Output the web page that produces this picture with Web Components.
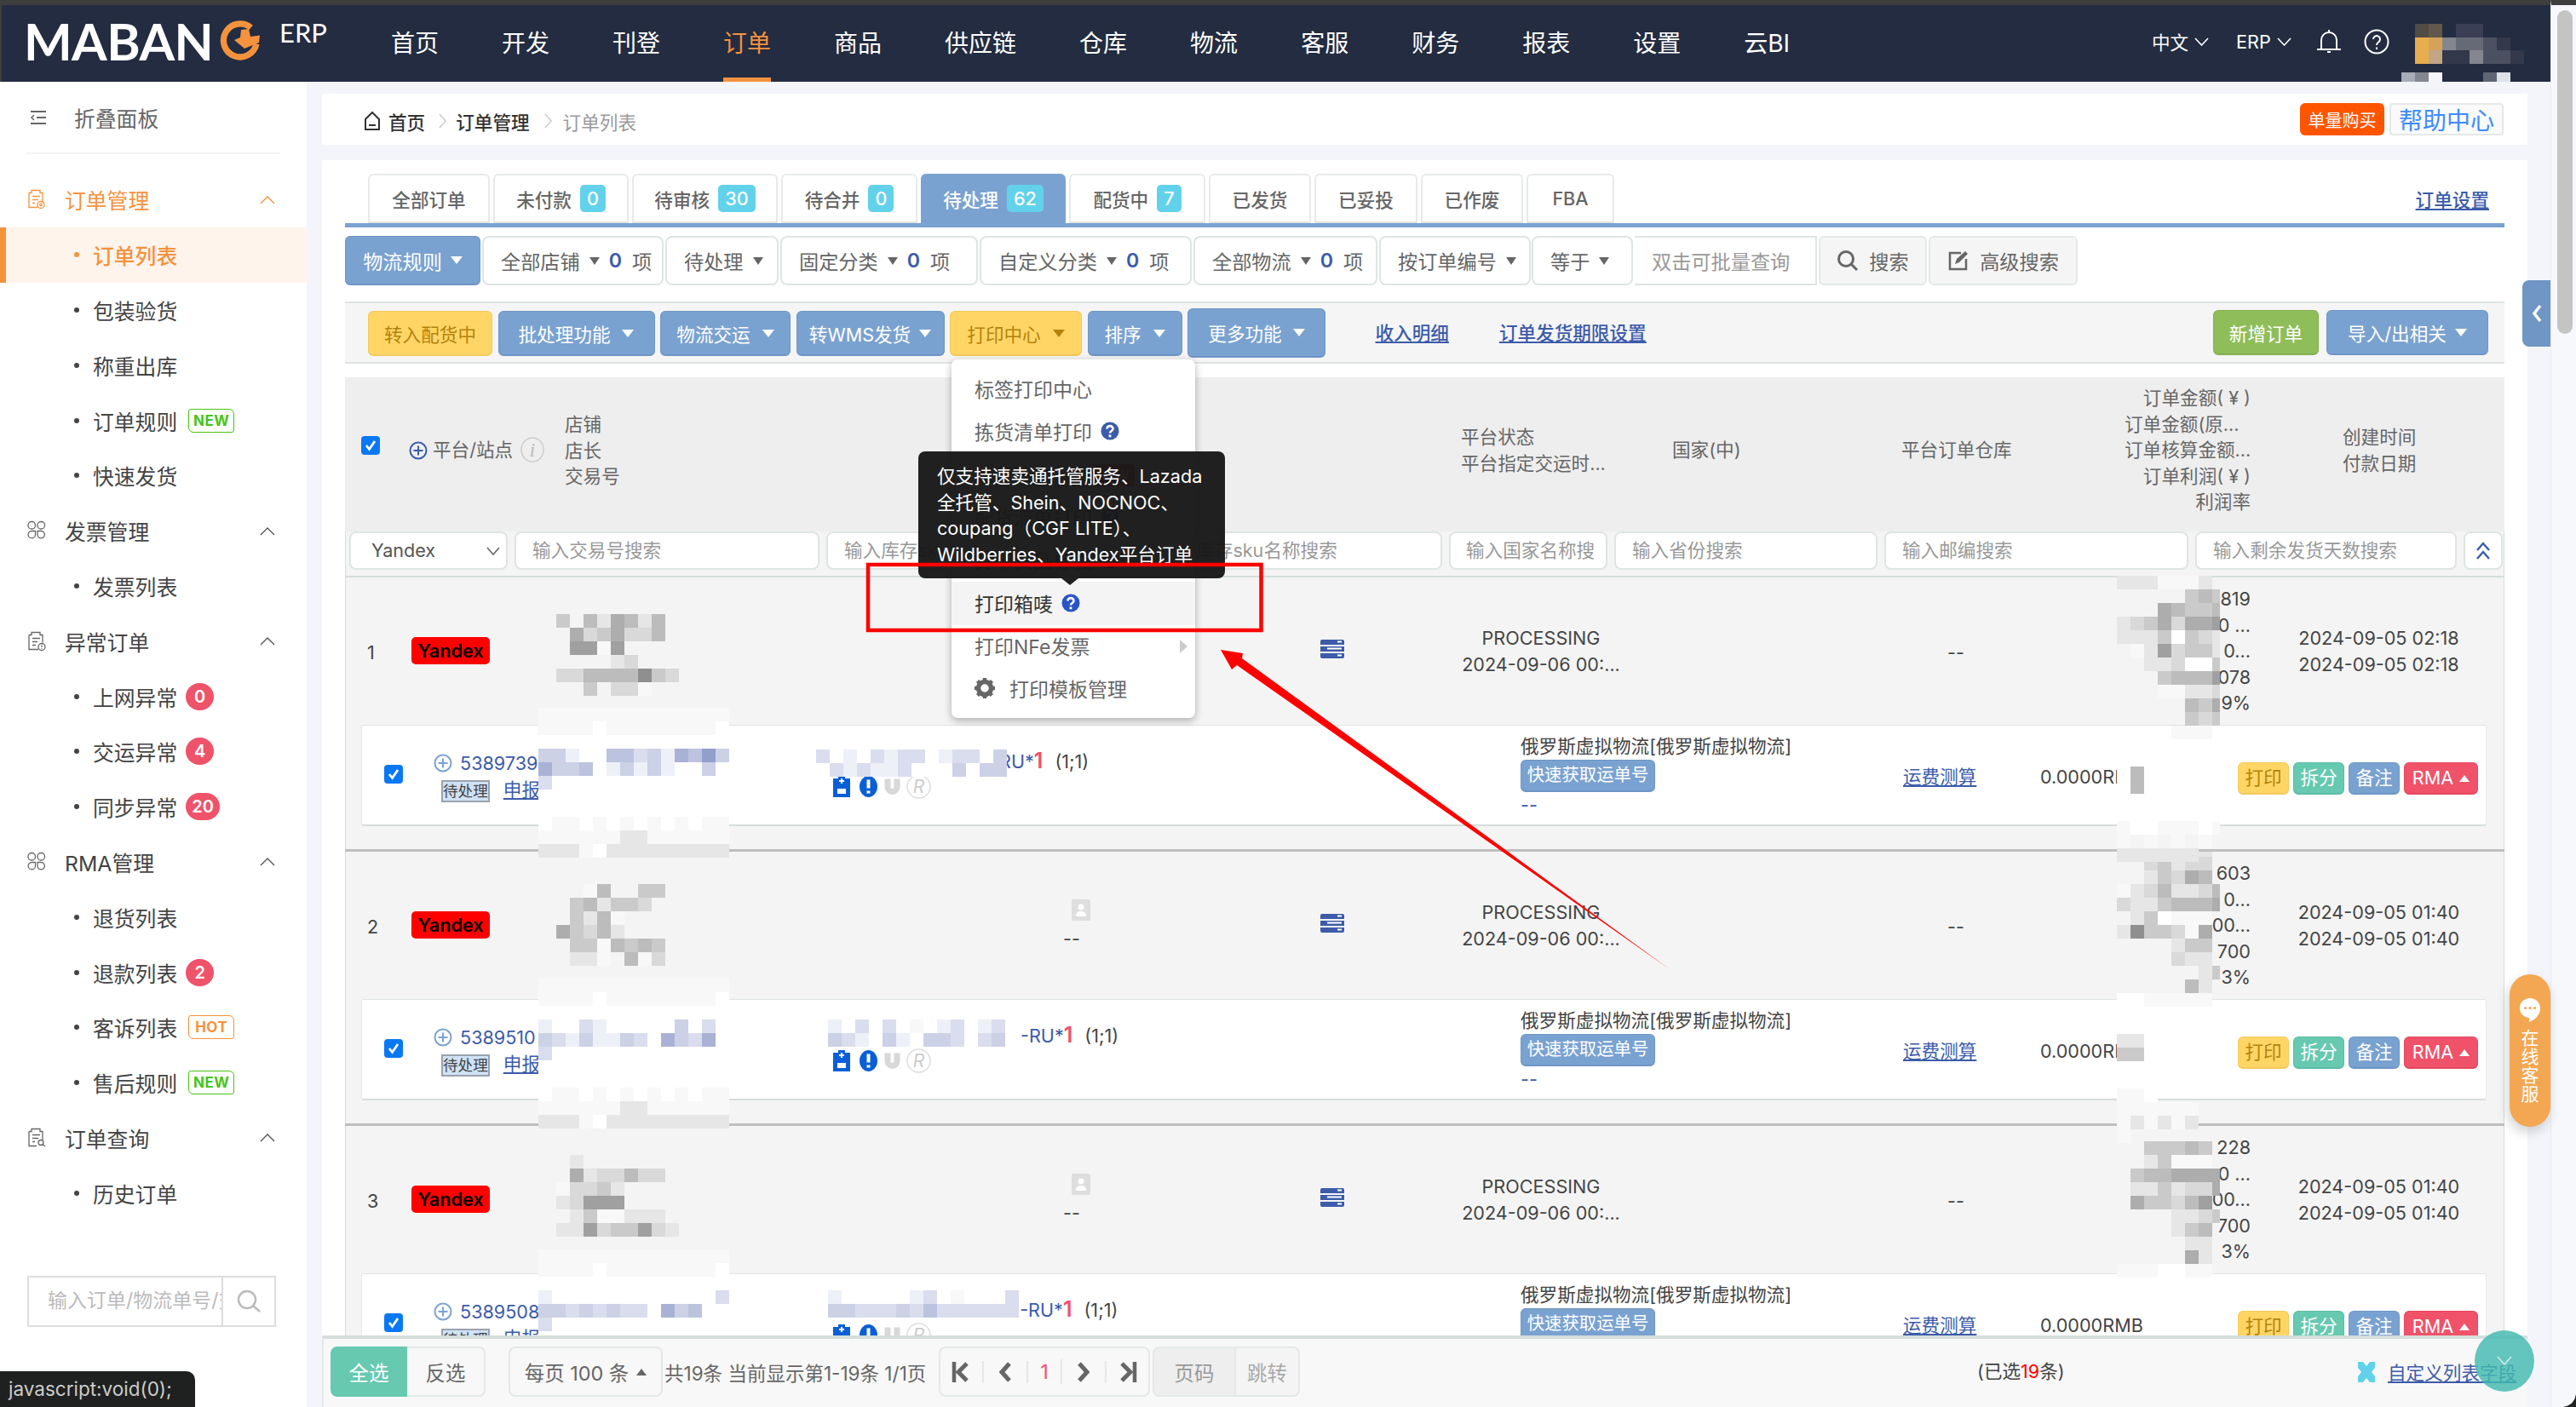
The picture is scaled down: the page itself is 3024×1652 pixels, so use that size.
<!DOCTYPE html>
<html lang="zh-CN">
<head>
<meta charset="utf-8">
<title>订单列表</title>
<style>
	html, body { margin: 0; padding: 0; }
	body {
		width: 3024px;
		height: 1652px;
		overflow: hidden;
		position: relative;
		display: grid;
		grid-template-columns: 360px 2634px 30px;
		grid-template-rows: 96px 1556px;
		font-family: Inter, "Noto Sans CJK SC", sans-serif;
		font-size: 21.6px;
		color: #555;
		background: #f3f5fa;
	}
	mb-navbar { grid-column: 1 / 3; grid-row: 1; }
	mb-scrollbar { grid-column: 3; grid-row: 1 / 3; }
	mb-sidebar { grid-column: 1; grid-row: 2; }
	.content {
		grid-column: 2;
		grid-row: 2;
		min-height: 0;
		display: flex;
		flex-direction: column;
		padding: 14px 27px 0 18px;
		gap: 18px;
	}
</style>
</head>
<body>
	<mb-navbar></mb-navbar>
	<mb-sidebar></mb-sidebar>
	<div class="content">
		<mb-breadcrumb></mb-breadcrumb>
		<mb-card>
			<mb-order-tabs></mb-order-tabs>
			<mb-filter-bar></mb-filter-bar>
			<mb-toolbar></mb-toolbar>
			<mb-order-table>
				<mb-table-head></mb-table-head>
				<mb-order-row data-order="1" style="z-index:3"></mb-order-row>
				<mb-order-row data-order="2" style="z-index:2"></mb-order-row>
				<mb-order-row data-order="3" style="z-index:1"></mb-order-row>
			</mb-order-table>
			<mb-footer-bar></mb-footer-bar>
		</mb-card>
	</div>
	<mb-scrollbar></mb-scrollbar>

	<mb-print-menu></mb-print-menu>
	<mb-annotation></mb-annotation>
	<mb-side-toggle></mb-side-toggle>
	<mb-chat-tab></mb-chat-tab>
	<mb-scroll-down></mb-scroll-down>
	<mb-status-tip>javascript:void(0);</mb-status-tip>

<script>
// static components: markup only, cloned into an open shadow root
function component(name, html) {
	const tpl = document.createElement('template');
	tpl.innerHTML = html;
	customElements.define(name, class extends HTMLElement {
		constructor() {
			super();
			this.attachShadow({mode: 'open'}).append(tpl.content.cloneNode(true));
		}
	});
}

const BLUE = '#7aa2d0';
const LINK = '#3c5ba9';
const ORANGE = '#f5923e';

// mosaic palette: grays, whites, blue tints of the blurred customer data
const PALETTE = {
	'8': '#8f8f8f', '9': '#a0a0a0', a: '#adadad', b: '#bcbcbc', c: '#cacaca', d: '#d9d9d9', e: '#e6e6e6', f: '#f8f8f8', g: '#ffffff',
	p: '#eef0f8', q: '#d9dded', r: '#ccd1e6', s: '#bcc3de', t: '#a9b2d5', u: '#939fcb',
	N: '#534c45', Q: '#62584c', D: '#3a3f55', O: '#e8ad4f', P: '#d4a35a', M: '#83868f', L: '#666a77', B: '#4c5161', K: '#33384a', R: '#c2a684',
	H: '#a8acb8', J: '#82868f', W: '#f4f5fa', V: '#5f6575', X: '#e0e2ea'
};

class MbMosaic extends HTMLElement {
	constructor() {
		super();
		this.attachShadow({mode: 'open'});
	}

	connectedCallback() {
		const rows = this.getAttribute('rows').split('|');
		const cw = this.getAttribute('cw') || 16;
		const ch = this.getAttribute('ch') || 16;
		const clip = this.getAttribute('w');
		let cells = '';
		rows.forEach((row) => {
			for (const c of row.padEnd(rows[0].length, '.')) {
				cells += `<i style="background:${PALETTE[c] || 'transparent'}"></i>`;
			}
		});
		this.shadowRoot.innerHTML = `<style>
			:host { position: absolute; left: ${this.getAttribute('x')}px; top: ${this.getAttribute('y')}px; display: grid;
				${clip ? `width: ${clip}px; overflow: hidden;` : ''}
				grid-template-columns: repeat(${rows[0].length}, ${cw}px); grid-auto-rows: ${ch}px; pointer-events: none; }
			i { display: block; }
		</style>${cells}`;
	}
}
customElements.define('mb-mosaic', MbMosaic);

class MbBtn extends HTMLElement {
	constructor() {
		super();
		this.attachShadow({mode: 'open'}).innerHTML = `<style>
			:host { display: inline-flex; align-items: center; justify-content: center; box-sizing: border-box; gap: 10px;
				height: 100%; border-radius: 6px; border: 1px solid transparent; border-bottom-width: 2px; white-space: nowrap; flex: none; }
			:host([kind=blue]) { background: ${BLUE}; border-color: #6d96c6; color: #fff; }
			:host([kind=yellow]) { background: #ffd666; border-color: #f4c95a; color: #b5820c; }
			:host([kind=green]) { background: #8fbd5a; border-color: #83b04f; color: #fff; }
			:host([kind=teal]) { background: #66c9b0; border-color: #5cbca4; color: #fff; }
			:host([kind=red]) { background: #f0526a; border-color: #e6485f; color: #fff; }
			:host([kind=gray]) { background: #f5f5f5; border: 2px solid #e4e8e8; color: #666; }
			i { display: none; width: 0; height: 0; border-left: 7px solid transparent; border-right: 7px solid transparent; border-top: 9px solid currentColor; }
			:host([caret]) i { display: block; }
			:host([caret=up]) i { border-top: 0; border-bottom: 8px solid currentColor; border-left-width: 6px; border-right-width: 6px; }
		</style><slot></slot><i></i>`;
	}
}
customElements.define('mb-btn', MbBtn);

component('mb-navbar', `
	<style>
		:host { display: flex; box-sizing: border-box; height: 96px; background: #232c40; border-top: 6px solid #3e3e3e; border-left: 2px solid #3e3e3e; position: relative; color: #fff; }
		.logo { width: 457px; padding-left: 26px; box-sizing: border-box; display: flex; align-items: flex-start; flex: none; font-family: Lato, sans-serif; }
		.mark { font-size: 60px; line-height: 60px; margin-top: 12px; font-weight: 700; letter-spacing: -.6px; width: 230px; }
		.logo svg { margin-top: 18px; flex: none; }
		.erp { font-size: 31px; line-height: 31px; margin: 17px 0 0 22px; }
		nav { display: flex; gap: 74px; font-size: 28px; }
		nav span { display: flex; align-items: center; border-bottom: 5px solid transparent; height: 85px; }
		nav .on { color: ${ORANGE}; border-bottom-color: ${ORANGE}; }
		.right { position: absolute; left: 2524px; top: 0; height: 85px; display: flex; align-items: center; font-size: 21.6px; }
		.right svg { display: block; flex: none; }
		.r { display: flex; align-items: center; gap: 7px; }
	</style>
	<div class="logo">
		<span class="mark">MABAN</span>
		<svg width="48" height="48" viewBox="0 0 48 48" fill="none">
			<path d="M36.500 8.500 A19.500 19.500 0 1 0 43 27.500" stroke="${ORANGE}" stroke-width="7.300"/>
			<polygon fill="${ORANGE}" points="25,11 34,10 36,19 47,17.500 46,26 29,33 17,23 24,20"/>
		</svg>
		<span class="erp">ERP</span>
	</div>
	<nav>
		<span>首页</span><span>开发</span><span>刊登</span><span class="on">订单</span><span>商品</span><span>供应链</span><span>仓库</span><span>物流</span><span>客服</span><span>财务</span><span>报表</span><span>设置</span><span>云BI</span>
	</nav>
	<div class="right">
		<div class="r" style="width:99px">中文<svg width="17" height="10" viewBox="0 0 17 10" fill="none" stroke="#fff" stroke-width="1.600"><path d="M1 1l7.500 8L16 1"/></svg></div>
		<div class="r" style="width:95px">ERP<svg width="17" height="10" viewBox="0 0 17 10" fill="none" stroke="#fff" stroke-width="1.600"><path d="M1 1l7.500 8L16 1"/></svg></div>
		<svg style="margin-right:27px" width="28" height="29" viewBox="0 0 28 29" fill="none" stroke="#fff" stroke-width="2"><path d="M5 23V13a9 9 0 0 1 18 0v10M0 24h28"/><path d="M14 1v2M12 27h4"/></svg>
		<svg width="30" height="30" viewBox="0 0 30 30" fill="none" stroke="#fff" stroke-width="2"><circle cx="15" cy="15" r="13.500"/><path d="M11 12a4 4 0 1 1 6 3.500c-1.500 1-2 1.500-2 3.500"/><path d="M15 21.500v2.500"/></svg>
	</div>
	<mb-mosaic x="2833" y="22" cw="16" ch="15.500" rows="NQ.DD...|OPMLLBK.|ORKKMBBK"></mb-mosaic>
	<mb-mosaic x="2817" y="79" cw="16" ch="11" rows="HJW...VX"></mb-mosaic>
`);

const SIDE_ICONS = {
	order: `<path d="M3 5h3V2h10v3h3v12M3 5v17h10M7 9h9M7 13h7M7 17h3"/><circle cx="17" cy="19" r="4"/><circle cx="17" cy="19" r="1.200"/>`,
	clover: `<rect x="2" y="2" width="8.500" height="8.500" rx="4"/><rect x="13" y="2" width="8.500" height="8.500" rx="4"/><path d="M6.200 13h4.300v4.500a4.200 4.200 0 1 1-4.300-4.500zM13 13h4.500a4.200 4.200 0 1 1-4.500 4.300z"/>`,
	warn: `<path d="M3 5h3V2h10v3h3v9M3 5v17h11M7 9h9M7 13h6M7 17h4"/><circle cx="18" cy="19" r="4"/><path d="M18 17v2.500M18 20.500v.8"/>`,
	find: `<path d="M3 5h3V2h10v3h3v10M3 5v17h9M7 9h9M7 13h7M7 17h3"/><circle cx="17" cy="18" r="3"/><path d="M19 20l3 2.500"/>`
};
const SIDE_MENU = [
	{icon: 'order', label: '订单管理', on: true, items: [{label: '订单列表', on: true}, {label: '包装验货'}, {label: '称重出库'}, {label: '订单规则', tag: 'NEW'}, {label: '快速发货'}]},
	{icon: 'clover', label: '发票管理', items: [{label: '发票列表'}]},
	{icon: 'warn', label: '异常订单', items: [{label: '上网异常', count: 0}, {label: '交运异常', count: 4}, {label: '同步异常', count: 20}]},
	{icon: 'clover', label: 'RMA管理', items: [{label: '退货列表'}, {label: '退款列表', count: 2}, {label: '客诉列表', tag: 'HOT'}, {label: '售后规则', tag: 'NEW'}]},
	{icon: 'find', label: '订单查询', items: [{label: '历史订单'}]}
];

class MbSidebar extends HTMLElement {
	constructor() {
		super();
		const shadowRoot = this.attachShadow({mode: 'open'});
		let rows = '';
		SIDE_MENU.forEach((group) => {
			rows += `<div class="row group ${group.on ? 'hot' : ''}">
				<svg class="ic" width="24" height="26" viewBox="0 0 24 25" fill="none" stroke="currentColor" stroke-width="1.300">${SIDE_ICONS[group.icon]}</svg>
				<span>${group.label}</span>
				<svg class="up" width="18" height="11" viewBox="0 0 18 11" fill="none" stroke="currentColor" stroke-width="1.400"><path d="M1 10l8-8 8 8"/></svg>
			</div>`;
			group.items.forEach((item) => {
				let extra = '';
				if (item.tag) extra = `<b class="tag ${item.tag}">${item.tag}</b>`;
				if (item.count !== undefined) extra = `<b class="num">${item.count}</b>`;
				rows += `<div class="row sub ${item.on ? 'on' : ''}"><u></u><span>${item.label}</span>${extra}</div>`;
			});
		});
		shadowRoot.innerHTML = `<style>
			:host { display: flex; flex-direction: column; background: #fff; min-height: 0; font-size: 24.800px; color: #444; }
			.fold { height: 85px; margin: 0 31px; border-bottom: 2px solid #f2f2f2; display: flex; align-items: center; gap: 32px; padding-left: 4px; color: #666; flex: none; box-sizing: border-box; }
			.menu { padding-top: 21px; }
			.row { height: 64.800px; display: flex; align-items: center; position: relative; box-sizing: border-box; }
			.group { padding-left: 31px; gap: 21px; }
			.group .up { position: absolute; left: 305px; color: #555; }
			.group .ic { color: #666; }
			.hot, .hot .ic, .hot .up { color: ${ORANGE}; }
			.sub { padding-left: 87px; }
			.sub u { width: 6px; height: 6px; border-radius: 50%; background: #444; margin-right: 16px; }
			.sub.on { background: #fef4ec; color: ${ORANGE}; box-shadow: inset 7px 0 ${ORANGE}; font-weight: 500; }
			.sub.on u { background: ${ORANGE}; }
			.tag { margin-left: 13px; height: 28px; width: 54px; box-sizing: border-box; display: flex; align-items: center; justify-content: center; border: 1.500px solid; border-radius: 3px 6px 3px 6px; font-size: 17px; letter-spacing: .5px; }
			.NEW { color: #48c414; }
			.HOT { color: ${ORANGE}; }
			.num { margin-left: 10px; height: 32px; min-width: 33px; padding: 0 7px; box-sizing: border-box; border-radius: 16px; background: #ef5369; color: #fff; font-size: 20px; font-weight: 600; display: flex; align-items: center; justify-content: center; }
			.search { margin: auto 36px 94px 32px; height: 60px; box-sizing: border-box; border: 2px solid #ddd; display: flex; flex: none; font-size: 23px; color: #bbb; }
			.search span { width: 228px; padding-left: 22px; box-sizing: border-box; overflow: hidden; white-space: nowrap; line-height: 54px; border-right: 2px solid #ddd; flex: none; }
			.search div { flex: 1; display: flex; align-items: center; justify-content: center; }
		</style>
		<div class="fold">
			<svg width="20" height="18" viewBox="0 0 20 18" fill="none" stroke="#666" stroke-width="2"><path d="M1 2h18M8 9h11M1 16h18"/><path d="M5 6L2 9l3 3" stroke-width="1.500"/></svg>
			<span>折叠面板</span>
		</div>
		<div class="menu">${rows}</div>
		<div class="search">
			<span>输入订单/物流单号/交易号</span>
			<div><svg width="28" height="28" viewBox="0 0 28 28" fill="none" stroke="#bbb" stroke-width="2.500"><circle cx="12" cy="12" r="10"/><path d="M19 19l8 7"/></svg></div>
		</div>`;
	}
}
customElements.define('mb-sidebar', MbSidebar);

component('mb-breadcrumb', `
	<style>
		:host { display: flex; align-items: center; height: 60px; background: #fff; padding: 4px 28px 0 48px; box-sizing: border-box; flex: none; position: relative; }
		span { white-space: nowrap; }
		b { font-weight: 500; color: #333; }
		.now { color: #999; }
		svg { margin-right: 8px; }
		.right { margin-left: auto; display: flex; gap: 6px; margin-top: -4px; align-self: center; }
		.buy { width: 99px; height: 38px; background: #ff5500; color: #fff; border-radius: 6px; font-size: 20px; display: flex; align-items: center; justify-content: center; }
		.help { width: 134px; height: 38px; box-sizing: border-box; border: 2px solid #e4e8e8; border-radius: 4px; background: #fafafa; color: #3d8bff; font-size: 28px; display: flex; align-items: center; justify-content: center; }
	</style>
	<svg width="22" height="24" viewBox="0 0 22 24" fill="none" stroke="#333" stroke-width="2"><path d="M3 22V10l8-8 8 8v12zM7 17h8"/></svg>
	<b>首页</b><svg style="margin:0 10px 0 16px" width="10" height="18" viewBox="0 0 10 18" fill="none" stroke="#ccc" stroke-width="1.600"><path d="M1 1l7 8-7 8"/></svg>
	<b>订单管理</b><svg style="margin:0 12px 0 17px" width="10" height="18" viewBox="0 0 10 18" fill="none" stroke="#ccc" stroke-width="1.600"><path d="M1 1l7 8-7 8"/></svg>
	<span class="now">订单列表</span>
	<div class="right"><span class="buy">单量购买</span><span class="help">帮助中心</span></div>
`);

component('mb-card', `
	<style>
		:host { display: flex; flex-direction: column; flex: 1; min-height: 0; background: #fff; overflow: hidden; padding-top: 16px; box-sizing: border-box; position: relative; }
	</style>
	<slot></slot>
`);

const TABS = [
	['全部订单', '', 143], ['未付款', '0', 159], ['待审核', '30', 171], ['待合并', '0', 160], ['待处理', '62', 170, true],
	['配货中', '7', 160], ['已发货', '', 120], ['已妥投', '', 121], ['已作废', '', 120], ['FBA', '', 103]
];

class MbOrderTabs extends HTMLElement {
	constructor() {
		super();
		const tabs = TABS.map(([label, count, width, on]) => `<div class="tab ${on ? 'on' : ''}" style="width:${width}px">${label}${count ? `<em>${count}</em>` : ''}</div>`).join('');
		this.attachShadow({mode: 'open'}).innerHTML = `<style>
			:host { display: flex; gap: 4px; margin: 0 27px; padding-left: 27px; height: 63px; box-sizing: border-box; border-bottom: 5px solid ${BLUE}; position: relative; flex: none; }
			.tab { height: 58px; box-sizing: border-box; border: 2px solid #e8eaea; border-bottom-color: #e4e4e4; border-radius: 6px 6px 0 0; display: flex; align-items: center; justify-content: center; gap: 10px; color: #666; font-weight: 500; }
			.on { background: ${BLUE}; border-color: ${BLUE}; color: #fff; }
			em { font-style: normal; background: #62d2eb; color: #fff; border-radius: 5px; height: 32px; padding: 0 8px; display: flex; align-items: center; font-weight: 500; }
			a { position: absolute; right: 18px; top: 14px; color: ${LINK}; text-decoration: underline; font-weight: 500; }
		</style>${tabs}<a>订单设置</a>`;
	}
}
customElements.define('mb-order-tabs', MbOrderTabs);

class MbFilter extends HTMLElement {
	constructor() {
		super();
		this.attachShadow({mode: 'open'});
	}

	connectedCallback() {
		const count = this.getAttribute('count');
		this.shadowRoot.innerHTML = `<style>
			:host { display: flex; align-items: center; box-sizing: border-box; height: 100%; border: 2px solid #dfe4e4; border-radius: 8px; padding-left: 20px; flex: none; color: #666; white-space: nowrap; background: #fff; }
			i { width: 0; height: 0; border-left: 6.500px solid transparent; border-right: 6.500px solid transparent; border-top: 9px solid #666; margin-left: 11px; }
			b { color: ${LINK}; font-weight: 600; margin: 0 12px 0 11px; }
		</style>${this.getAttribute('label')}<i></i>${count !== null ? `<b>${count}</b>项` : ''}`;
	}
}
customElements.define('mb-filter', MbFilter);

component('mb-filter-bar', `
	<style>
		:host { display: flex; gap: 2px; margin: 10px 27px 0; height: 58px; font-size: 23.200px; flex: none; }
		.input { width: 214px; box-sizing: border-box; border: 2px solid #dfe4e4; border-left: 0; padding-left: 20px; display: flex; align-items: center; color: #999; flex: none; }
		svg { margin-right: 12px; }
	</style>
	<mb-btn kind="blue" caret style="width:159px">物流规则</mb-btn>
	<mb-filter label="全部店铺" count="0" style="width:213px"></mb-filter>
	<mb-filter label="待处理" style="width:133px"></mb-filter>
	<mb-filter label="固定分类" count="0" style="width:232px"></mb-filter>
	<mb-filter label="自定义分类" count="0" style="width:249px"></mb-filter>
	<mb-filter label="全部物流" count="0" style="width:216px"></mb-filter>
	<mb-filter label="按订单编号" style="width:178px"></mb-filter>
	<mb-filter label="等于" style="width:119px;margin-left:-1px"></mb-filter>
	<div class="input">双击可批量查询</div>
	<mb-btn kind="gray" style="width:127px;gap:0"><svg width="26" height="26" viewBox="0 0 26 26" fill="none" stroke="#666" stroke-width="3"><circle cx="11" cy="11" r="8.500"/><path d="M17 17l7 7"/></svg>搜索</mb-btn>
	<mb-btn kind="gray" style="width:175px;gap:0"><svg width="26" height="26" viewBox="0 0 26 26" fill="none" stroke="#666" stroke-width="2.500"><path d="M16 4H3v19h19V11"/><path d="M9 17l2-6L21 2l3 3-10 10z" fill="#666" stroke="none"/></svg>高级搜索</mb-btn>
`);

component('mb-toolbar', `
	<style>
		:host { display: flex; align-items: flex-start; margin: 19px 27px 0; height: 73px; box-sizing: border-box; background: #f5f5f5; border-top: 2px solid #dfe4e4; border-bottom: 2px solid #dfe4e4; padding: 9px 19px 0 27px; flex: none; position: relative; }
		mb-btn { height: 53px; margin-right: 6.500px; }
		a { color: ${LINK}; text-decoration: underline; font-weight: 500; line-height: 53px; white-space: nowrap; }
	</style>
	<mb-btn kind="yellow" style="width:146px">转入配货中</mb-btn>
	<mb-btn kind="blue" caret style="width:184px;gap:14px">批处理功能</mb-btn>
	<mb-btn kind="blue" caret style="width:153px;gap:14px">物流交运</mb-btn>
	<mb-btn kind="blue" caret style="width:174px">转WMS发货</mb-btn>
	<mb-btn kind="yellow" caret style="width:155px;gap:14px">打印中心</mb-btn>
	<mb-btn kind="blue" caret style="width:111px;gap:14px">排序</mb-btn>
	<mb-btn kind="blue" caret style="width:162px;height:58px;margin-top:-3px;gap:13px">更多功能</mb-btn>
	<a style="margin-left:52px">收入明细</a>
	<a style="margin-left:59px">订单发货期限设置</a>
	<mb-btn kind="green" style="width:124px;margin-left:auto;margin-right:9px;margin-top:-1px">新增订单</mb-btn>
	<mb-btn kind="blue" caret style="width:190px;margin-right:0;margin-top:-1px">导入/出相关</mb-btn>
`);

component('mb-order-table', `
	<style>
		:host { display: block; flex: 1; min-height: 0; overflow: hidden; margin: 16px 27px 0; position: relative; }
	</style>
	<slot></slot>
`);

component('mb-table-head', `
	<style>
		:host { display: block; height: 235px; background: #f4f4f4; box-sizing: border-box; border-bottom: 2px solid #d5dedc; box-shadow: inset 1px 0 #d5dedc, inset -1px 0 #d5dedc; color: #666; }
		.titles { height: 181px; background: #eee; display: flex; align-items: flex-start; padding-top: 40px; box-sizing: border-box; line-height: 30.600px; }
		.c { flex: none; white-space: nowrap; box-sizing: border-box; }
		.platform { width: 258px; display: flex; align-items: center; height: 90px; padding-left: 19px; }
		.check { width: 22px; height: 22px; border-radius: 4px; background: #0a78f5; display: flex; align-items: center; justify-content: center; margin: -10px 34px 0 0; }
		.fields { display: flex; flex-direction: column; }
		.mid { padding-top: 15px; }
		.one { padding-top: 30px; }
		.r { text-align: right; margin-top: -31px; }
		.inputs { display: flex; gap: 8px; padding: 0 2px 0 5px; height: 45px; margin-top: 0; background: transparent; }
		.in { box-sizing: border-box; height: 45px; background: #fff; border: 2px solid #dfe4e4; border-radius: 8px; padding-left: 19px; line-height: 41px; color: #999; white-space: nowrap; overflow: hidden; flex: none; }
		.sel { color: #555; display: flex; align-items: center; justify-content: space-between; padding-right: 7px; padding-left: 24px; }
		.top { padding: 0; display: flex; align-items: center; justify-content: center; }
	</style>
	<div class="titles">
		<div class="c platform">
			<span class="check"><svg width="14" height="14" viewBox="0 0 14 14" fill="none" stroke="#fff" stroke-width="2.800"><path d="M2 7l3.500 4.500L12 2"/></svg></span>
			<svg width="22" height="22" viewBox="0 0 22 22" fill="none" stroke="${LINK}" stroke-width="2" style="flex:none;margin-top:1px"><circle cx="11" cy="11" r="9.500"/><path d="M11 5.500v11M5.500 11h11"/></svg>
			<span style="margin-left:6px">平台/站点</span>
			<svg width="28" height="30" viewBox="0 0 28 30" style="margin-left:9px;flex:none"><ellipse cx="14" cy="15" rx="13" ry="14" fill="none" stroke="#ccc" stroke-width="1.500"/><text x="14" y="23" font-size="23" font-style="italic" text-anchor="middle" fill="#bbb" font-family="Liberation Serif">i</text></svg>
		</div>
		<div class="c fields" style="width:1052px"><span>店铺</span><span>店长</span><span>交易号</span></div>
		<div class="c fields mid" style="width:248px"><span>平台状态</span><span>平台指定交运时...</span></div>
		<div class="c one" style="width:269px">国家(中)</div>
		<div class="c one" style="width:262px">平台订单仓库</div>
		<div class="c fields r" style="width:148px"><span>订单金额( ¥ )</span><span style="padding-right:15px">订单金额(原...</span><span>订单核算金额...</span><span>订单利润( ¥ )</span><span>利润率</span></div>
		<div class="c fields mid" style="margin-left:108px"><span>创建时间</span><span>付款日期</span></div>
	</div>
	<div class="inputs">
		<div class="in sel" style="width:186px">Yandex<svg width="16" height="10" viewBox="0 0 16 10" fill="none" stroke="#666" stroke-width="1.600"><path d="M1 1l7 8 7-8"/></svg></div>
		<div class="in" style="width:358px">输入交易号搜索</div>
		<div class="in" style="width:362px">输入库存sku搜索</div>
		<div class="in" style="width:353px">输入库存sku名称搜索</div>
		<div class="in" style="width:186px;padding-left:18px">输入国家名称搜</div>
		<div class="in" style="width:309px">输入省份搜索</div>
		<div class="in" style="width:357px">输入邮编搜索</div>
		<div class="in" style="width:307px">输入剩余发货天数搜索</div>
		<div class="in top" style="width:46px"><svg width="20" height="22" viewBox="0 0 20 22" fill="none" stroke="${LINK}" stroke-width="2.400"><path d="M3 10l7-8 7 8M3 20l7-8 7 8"/></svg></div>
	</div>
`);

const NAME_BLUR_TOP = 'ffffffffffffff|ffffgffffffffg|gggggggggggggg';
const NAME_BLUR_END = 'qggggggggggggg|gggggggggggggg|gggggggggggggg|gffgfgfgfgfgff|ffffffeeffffff|eeefgeeeeeeeee';

const ORDERS = {
	1: {
		id: '5389739', skuX: 215, sku: 'RU', person: false,
		amounts: ['819', '0 ...', '0...', '078', '9%'],
		created: '2024-09-05 02:18', paid: '2024-09-05 02:18',
		blur: [
			{x: 248, y: 43, rows: 'c.beabeb.|.adcaddb.|.99f9....|....ed...|ddbbbb8cd|..c.ddf..'},
			{x: 227, y: 153, rows: `${NAME_BLUR_TOP}|rrpggssqrptsur|trrsgprprpggrg|${NAME_BLUR_END}`},
			{x: 553, y: 202, rows: 'qgpgqpqqgpqqgr|gqpqppqgggrgrr'},
			{x: 2080, y: -2, w: 121, rows: 'eeefffe.|.....cbc|...abccb|edcadaa9|eeecgcde|.fe9dcce|..eedggc|...cbbb9|...ffeed|.....bca|.....cdc|ggggfffg|........|........|gbgggggg|gbgggggg|........|........|fggfffgf|f.f.f.f.|eeeeee..'}
		]
	},
	2: {
		id: '5389510', skuX: 240, sku: '-RU', person: true,
		amounts: ['603', '0...', '00...', '700', '3%'],
		created: '2024-09-05 01:40', paid: '2024-09-05 01:40',
		blur: [
			{x: 248, y: 38, rows: '..fb..cc.|.cbeccd..|.cebf....|acdbe....|.ccfbcbc.|.eef.bfd.'},
			{x: 227, y: 149, rows: `${NAME_BLUR_TOP}|pggqpgggggrgqg|rqprpprqgtrqtg|${NAME_BLUR_END}`},
			{x: 567, y: 197, rows: 'pgqgqgfgpqgpqg|rqpgrpgrrqgqrg'},
			{x: 2080, y: -10, w: 121, rows: 'fffeeee.|..dcedd.|..ecdab.|fedbeedb|deecbbba|.ecgfff.|e8ccdfa.|....ecc.|....dee.|......ec|.....be.|ggfffff.|........|........|eegggggg|ccgggggg|........|........|ffg.....|ffffff..|fefefe..|f.......'}
		]
	},
	3: {
		id: '5389508', skuX: 226, sku: '2-RU', person: true,
		amounts: ['228', '0 ...', '00...', '700', '3%'],
		created: '2024-09-05 01:40', paid: '2024-09-05 01:40',
		blur: [
			{x: 248, y: 34, rows: '.e.......|.aeddbdd.|fddce....|ed999....|.ecffeee.|ee9dcc9de'},
			{x: 227, y: 145, rows: `${NAME_BLUR_TOP}|pggggggggggggq|rrqrqrqqgtrsgg|${NAME_BLUR_END}`},
			{x: 567, y: 193, rows: 'pgggggpqgfgggq|rrqqqrqsqqqqqq'},
			{x: 2080, y: 18, w: 121, rows: '..cccbc.|..ecfff.|.cbbaaaa|.eecedda|.accdb9.|....eedc|....ecb.|.....ee.|.....ae.|fffggff.'}
		]
	}
};

class MbOrderRow extends HTMLElement {
	constructor() {
		super();
		this.attachShadow({mode: 'open'});
	}

	connectedCallback() {
		const order = ORDERS[this.dataset.order];
		const no = this.dataset.order;
		const person = `<svg style="margin-left:22px" width="22" height="25" viewBox="0 0 22 25"><rect width="22" height="25" rx="2" fill="#dedede"/><circle cx="11" cy="9" r="3.500" fill="#fff"/><path d="M5 20c0-5 3-6 6-6s6 1 6 6z" fill="#fff"/></svg>`;
		const blur = order.blur.map((b) => `<mb-mosaic x="${b.x}" y="${b.y}" ${b.w ? `w="${b.w}"` : ''} rows="${b.rows}"></mb-mosaic>`).join('');
		this.shadowRoot.innerHTML = `<style>
			:host { display: block; height: 322px; position: relative; background: #f4f4f4; box-sizing: border-box; border-bottom: 3px solid #bfbfbf; box-shadow: inset 1px 0 #d5dedc, inset -1px 0 #d5dedc; color: #444; line-height: 30.600px; }
			.top { height: 173px; display: flex; align-items: center; }
			.c { flex: none; box-sizing: border-box; white-space: nowrap; }
			.yx { display: inline-block; width: 92px; height: 32px; line-height: 32px; text-align: center; background: #f00; color: #000; border-radius: 5px; font-weight: 600; margin-top: -10px; }
			.center { text-align: center; display: flex; flex-direction: column; align-items: center; }
			.amt { text-align: right; display: flex; flex-direction: column; }
			.card { height: 119px; margin: 0 21px 0 19px; background: #fff; box-sizing: border-box; border-bottom: 2px solid #d5dedc; border-top: 1px solid #dfe4e4; border-left: 1px solid #e8eaea; border-right: 1px solid #e8eaea; display: flex; border-radius: 3px; }
			.check { width: 84px; padding-left: 26px; padding-top: 46px; }
			.check span { width: 22px; height: 22px; border-radius: 4px; background: #0a78f5; display: flex; align-items: center; justify-content: center; }
			.idc { width: 449px; padding-top: 29px; }
			.idc .l { display: flex; align-items: center; color: ${LINK}; gap: 9px; }
			.st { font-size: 17.600px; background: #cfe2f7; border: 2px solid #9aa3ad; color: #444; line-height: 22px; height: 26px; box-sizing: border-box; padding: 0; margin: 0 16px 0 9px; display: inline-block; vertical-align: middle; }
			a { color: ${LINK}; text-decoration: underline; }
			.skuc { width: 827px; padding-top: 26px; }
			.sku { color: ${LINK}; padding-left: ${order.skuX}px; }
			.sku b { color: #f0526a; font-size: 25px; font-weight: 600; }
			.sku span { color: #444; margin-left: 14px; }
			.ics { display: flex; align-items: center; gap: 11px; padding-left: 20px; margin-top: 1px; height: 26px; }
			.log { width: 449px; padding-top: 9px; }
			.log mb-btn { height: 38px; width: 158px; font-size: 20.400px; display: flex; }
			.dash { color: ${LINK}; }
			.fee { width: 161px; padding-top: 45px; }
			.money { width: 232px; padding-top: 45px; }
			.acts { display: flex; gap: 5px; padding-top: 43px; }
			.acts mb-btn { height: 38px; }
		</style>
		<div class="top">
			<div class="c" style="width:78px;padding-left:26px;padding-top:4px">${no}</div>
			<div class="c" style="width:170px"><span class="yx">Yandex</span></div>
			<div class="c" style="width:500px"></div>
			<div class="c center" style="width:210px;padding-top:1px">${person}<span style="margin-top:6px">--</span></div>
			<div class="c" style="width:187px"></div>
			<div class="c" style="width:165px"><svg style="display:block;margin-top:-6px" width="28" height="22" viewBox="0 0 28 22"><path d="M2 0h24a2 2 0 0 1 2 2v4H0V2a2 2 0 0 1 2-2zM0 8h28v6H0zM0 16h28v4a2 2 0 0 1-2 2H2a2 2 0 0 1-2-2z" fill="${LINK}"/><path d="M20 2.500h5M8 10.500h17M20 18.500h5" stroke="#fff" stroke-width="2"/></svg></div>
			<div class="c center" style="width:188px"><span>PROCESSING</span><span>2024-09-06 00:...</span></div>
			<div class="c" style="width:284px"></div>
			<div class="c center" style="width:218px;padding-top:3px">--</div>
			<div class="c amt" style="width:237px">${order.amounts.map((a) => `<span>${a}</span>`).join('')}</div>
			<div class="c center" style="margin-left:55px;width:191px"><span>${order.created}</span><span>${order.paid}</span></div>
		</div>
		<div class="card">
			<div class="c check"><span><svg width="14" height="14" viewBox="0 0 14 14" fill="none" stroke="#fff" stroke-width="2.800"><path d="M2 7l3.500 4.500L12 2"/></svg></span></div>
			<div class="c idc">
				<div class="l"><svg width="22" height="22" viewBox="0 0 22 22" fill="none" stroke="${BLUE}" stroke-width="2"><circle cx="11" cy="11" r="9.500"/><path d="M11 5.500v11M5.500 11h11"/></svg>${order.id}</div>
				<div><span class="st">待处理</span><a>申报</a></div>
			</div>
			<div class="c skuc">
				<div class="sku">${order.sku}*<b>1</b><span>(1;1)</span></div>
				<div class="ics">
					<svg width="20" height="25" viewBox="0 0 20 25"><path d="M0 3h6V0h8v3h6v22H0z" fill="#0a5fd6"/><path d="M10 3v6M7 6h6" stroke="#fff" stroke-width="2"/><rect x="5" y="15" width="10" height="6" fill="#fff"/></svg>
					<svg width="21" height="25" viewBox="0 0 21 25"><ellipse cx="10.500" cy="12.500" rx="10.500" ry="12.500" fill="#0a5fd6"/><path d="M10.500 4.500v10M10.500 17.500v3" stroke="#fff" stroke-width="4"/></svg>
					<svg style="margin-left:-4px" width="21" height="25" viewBox="0 0 21 25" fill="none" stroke="#d8d8d8"><path d="M5 3v10a5.500 5.500 0 0 0 11 0V3" stroke-width="7"/><path d="M1 3h8M12 3h8" stroke="#fff" stroke-width="1"/></svg>
					<svg style="margin-left:-5px" width="29" height="29" viewBox="0 0 29 29"><circle cx="14.500" cy="14.500" r="13.500" fill="none" stroke="#ddd" stroke-width="1.500"/><text x="14.500" y="22" font-size="21" font-style="italic" text-anchor="middle" fill="#ccc" font-family="Inter">R</text></svg>
				</div>
			</div>
			<div class="c log">
				<div>俄罗斯虚拟物流[俄罗斯虚拟物流]</div>
				<mb-btn kind="blue">快速获取运单号</mb-btn>
				<div class="dash">--</div>
			</div>
			<div class="c fee"><a>运费测算</a></div>
			<div class="c money">0.0000RMB</div>
			<div class="c acts">
				<mb-btn kind="yellow" style="width:60px">打印</mb-btn>
				<mb-btn kind="teal" style="width:60px">拆分</mb-btn>
				<mb-btn kind="blue" style="width:60px">备注</mb-btn>
				<mb-btn kind="red" caret="up" style="width:87px;gap:7px">RMA</mb-btn>
			</div>
		</div>
		${blur}`;
	}
}
customElements.define('mb-order-row', MbOrderRow);

component('mb-footer-bar', `
	<style>
		:host { display: flex; height: 84px; box-sizing: border-box; flex: none; background: #f8f8f8; border-top: 4px solid #d5dedc; border-left: 2px solid #e4e8e8; padding: 9px 0 0 8px; position: relative; z-index: 5; }
		.set { display: flex; height: 59px; align-items: stretch; font-size: 23.400px; flex: none; }
		.set > * { box-sizing: border-box; display: flex; align-items: center; justify-content: center; }
		.all { width: 90px; background: #66c9b0; color: #fff; border-radius: 8px 0 0 8px; }
		.inv { width: 92px; border: 2px solid #e4e8e8; border-left: 0; border-radius: 0 8px 8px 0; color: #666; }
		.size { margin-left: 27px; width: 181px; border: 2px solid #e4e8e8; border-radius: 8px; color: #666; gap: 9px; white-space: nowrap; }
		.size i { width: 0; height: 0; border-left: 6px solid transparent; border-right: 6px solid transparent; border-bottom: 8px solid #666; }
		.info { margin-left: 2px; width: 322px; font-size: 22.500px; justify-content: flex-start !important; white-space: nowrap; color: #666; }
		.pager { display: flex; width: 248px; border: 2px solid #e4e8e8; border-radius: 8px; }
		.pager span { display: flex; align-items: center; justify-content: center; border-right: 2px solid #e4e8e8; flex: none; box-sizing: border-box; }
		.pager span:last-child { border-right: 0; }
		.code { margin-left: 3px; width: 98px; background: #eee; border: 2px solid #e4e8e8; border-radius: 8px 0 0 8px; color: #999; }
		.jump { width: 75px; background: #f4f4f4; border: 2px solid #e4e8e8; border-left: 0; border-radius: 0 8px 8px 0; color: #aaa; }
		.sel { margin-left: 795px; line-height: 59px; width: 103px; white-space: nowrap; color: #444; }
		.sel em { font-style: normal; color: #f00; }
		.cfg { margin-left: 342px; display: flex; align-items: center; gap: 13px; height: 59px; color: ${LINK}; text-decoration: underline; white-space: nowrap; }
	</style>
	<div class="set"><span class="all">全选</span><span class="inv">反选</span><span class="size">每页 100 条<i></i></span></div>
	<div class="set"><span class="info">共19条 当前显示第1-19条 1/1页</span></div>
	<div class="set">
		<div class="pager" style="display:flex">
			<span style="width:52px"><svg width="22" height="26" viewBox="0 0 22 26" fill="none" stroke="#666"><path d="M3 1v24" stroke-width="4.500"/><path d="M18 3L8 13l10 10" stroke-width="5"/></svg></span>
			<span style="width:52px"><svg width="14" height="26" viewBox="0 0 14 26" fill="none" stroke="#666" stroke-width="5"><path d="M12 3L3 13l9 10"/></svg></span>
			<span style="width:40px;color:#f0526a">1</span>
			<span style="width:52px"><svg width="14" height="26" viewBox="0 0 14 26" fill="none" stroke="#666" stroke-width="5"><path d="M2 3l9 10-9 10"/></svg></span>
			<span style="width:50px"><svg width="22" height="26" viewBox="0 0 22 26" fill="none" stroke="#666"><path d="M19 1v24" stroke-width="4.500"/><path d="M4 3l10 10L4 23" stroke-width="5"/></svg></span>
		</div>
		<span class="code">页码</span><span class="jump">跳转</span>
	</div>
	<span class="sel">(已选<em>19</em>条)</span>
	<span class="cfg"><svg width="24" height="28" viewBox="0 0 24 28" fill="#62d2eb"><path d="M2 2h6l4 5 4-5h6v7l-4 5 4 5v7h-6l-4-5-4 5H2v-7l4-5-4-5z"/></svg>自定义列表字段</span>
`);

class MbPrintMenu extends HTMLElement {
	constructor() {
		super();
		const help = (color) => `<svg width="22" height="22" viewBox="0 0 22 22" style="margin-left:10px;flex:none"><circle cx="11" cy="11" r="10.500" fill="${color}"/><path d="M7.500 8.500c0-4.500 7-4.500 7 0 0 2.500-3.500 2.500-3.500 5" fill="none" stroke="#fff" stroke-width="2.600"/><path d="M11 15.500v2.800" stroke="#fff" stroke-width="2.800"/></svg>`;
		this.attachShadow({mode: 'open'}).innerHTML = `<style>
			:host { position: absolute; left: 1117px; top: 422px; width: 286px; height: 421px; box-sizing: border-box; padding: 10px 0; background: #fff; border-radius: 7px; box-shadow: 0 3px 10px rgba(0,0,0,.3); font-size: 23px; color: #666; z-index: 10; }
			.item { height: 50.300px; box-sizing: border-box; display: flex; align-items: center; padding: 0 0 2px 27px; white-space: nowrap; position: relative; }
			.hover { background: #f4f4f4; color: #333; }
			.new { position: absolute; left: 165px; top: 12px; width: 50px; height: 26px; border-radius: 3px; background: #f0344a; color: #fff; font-size: 16px; line-height: 26px; text-align: center; font-weight: 600; }
			.arrow { position: absolute; right: 9px; top: 17px; width: 0; height: 0; border-left: 9px solid #ccc; border-top: 8px solid transparent; border-bottom: 8px solid transparent; }
			.tip { position: absolute; left: -39px; top: 108px; width: 360px; height: 149px; box-sizing: border-box; padding: 14px 22px; background: rgba(24,24,24,.965); border-radius: 8px; color: #fff; font-size: 21.600px; line-height: 30.600px; white-space: nowrap; z-index: 2; }
			.tip::after { content: ''; position: absolute; left: 168px; bottom: -8px; border-left: 10px solid transparent; border-right: 10px solid transparent; border-top: 8px solid rgba(24,24,24,.965); }
		</style>
		<div class="item">标签打印中心</div>
		<div class="item">拣货清单打印${help(LINK)}</div>
		<div class="item">拣货波次打印<span class="new">NEW</span></div>
		<div class="item">配货清单打印${help(LINK)}</div>
		<div class="item">打印货品标签${help(LINK)}</div>
		<div class="item hover">打印箱唛${help('#2a55c5')}</div>
		<div class="item">打印NFe发票<i class="arrow"></i></div>
		<div class="item"><svg style="margin-right:17px" width="24" height="24" viewBox="0 0 24 24"><circle cx="12" cy="12" r="7.500" fill="none" stroke="#666" stroke-width="5.500"/><path d="M12 0v24M0 12h24M3.500 3.500l17 17M20.500 3.500l-17 17" stroke="#666" stroke-width="4.500" stroke-dasharray="5 14 5"/></svg>打印模板管理</div>
		<div class="tip">仅支持速卖通托管服务、Lazada<br>全托管、Shein、NOCNOC、<br>coupang（CGF LITE）、<br>Wildberries、Yandex平台订单</div>`;
	}
}
customElements.define('mb-print-menu', MbPrintMenu);

component('mb-annotation', `
	<style>
		:host { position: absolute; left: 0; top: 0; width: 3024px; height: 1652px; pointer-events: none; z-index: 20; }
		svg { display: block; }
	</style>
	<svg width="3024" height="1652" viewBox="0 0 3024 1652">
		<rect x="1019" y="663" width="461.500" height="77" fill="none" stroke="#f00" stroke-width="4.500"/>
		<polygon fill="#f00" points="1433,763 1459,767 1458,773 1960,1138 1452,781 1446,786"/>
	</svg>
`);

component('mb-side-toggle', `
	<style>
		:host { position: absolute; left: 2961px; top: 329px; width: 33px; height: 78px; background: #6f96c4; border-radius: 8px 0 0 8px; display: flex; align-items: center; justify-content: center; z-index: 30; }
	</style>
	<svg width="12" height="22" viewBox="0 0 12 22" fill="none" stroke="#fff" stroke-width="3.500"><path d="M10 2L3 11l7 9"/></svg>
`);

component('mb-chat-tab', `
	<style>
		:host { position: absolute; left: 2946px; top: 1144px; width: 48px; height: 179px; border-radius: 24px; background: #f3a753; box-shadow: -2px 6px 14px rgba(0,0,0,.18); display: flex; flex-direction: column; align-items: center; padding-top: 27px; box-sizing: border-box; color: #fff; font-size: 21px; line-height: 22px; z-index: 30; }
		svg { margin-bottom: 7px; }
		span { display: block; }
	</style>
	<svg width="26" height="30" viewBox="0 0 26 30"><path d="M13 1C6 1 1 6 1 12.500 1 19 6 24 12 24v5c6-2 13-8 13-16C25 6 20 1 13 1z" fill="#fff"/><circle cx="7.500" cy="12.500" r="1.600" fill="#f3a753"/><circle cx="13" cy="12.500" r="1.600" fill="#f3a753"/><circle cx="18.500" cy="12.500" r="1.600" fill="#f3a753"/></svg>
	<span>在</span><span>线</span><span>客</span><span>服</span>
`);

component('mb-scroll-down', `
	<style>
		:host { position: absolute; left: 2905px; top: 1562px; width: 70px; height: 72px; border-radius: 50%; background: rgba(66,186,176,.82); display: flex; align-items: center; justify-content: center; z-index: 30; }
	</style>
	<svg width="18" height="12" viewBox="0 0 18 12" fill="none" stroke="#cfeeea" stroke-width="1.600"><path d="M1 1l8 9 8-9"/></svg>
`);

component('mb-status-tip', `
	<style>
		:host { position: absolute; left: 0; top: 1610px; width: 229px; height: 42px; box-sizing: border-box; padding-left: 10px; background: #1f2020; border-radius: 0 10px 0 0; color: #ccc; font-size: 22.500px; line-height: 42px; white-space: nowrap; z-index: 30; }
	</style>
	<slot></slot>
`);

component('mb-scrollbar', `
	<style>
		:host { display: block; position: relative; background: #f7f8fc; border-top: 6px solid #3e3e3e; border-left: 1px solid #e9ebf2; box-sizing: border-box; }
		.thumb { position: absolute; left: 7px; top: 6px; width: 18px; height: 380px; border-radius: 9px; background: #c4c4c4; }
		.corner { position: absolute; right: 0; bottom: 0; width: 16px; height: 16px; background: radial-gradient(circle at 0 0, transparent 15.500px, #222 16px); }
	</style>
	<div class="thumb"></div>
	<div class="corner"></div>
`);
</script>
</body>
</html>
